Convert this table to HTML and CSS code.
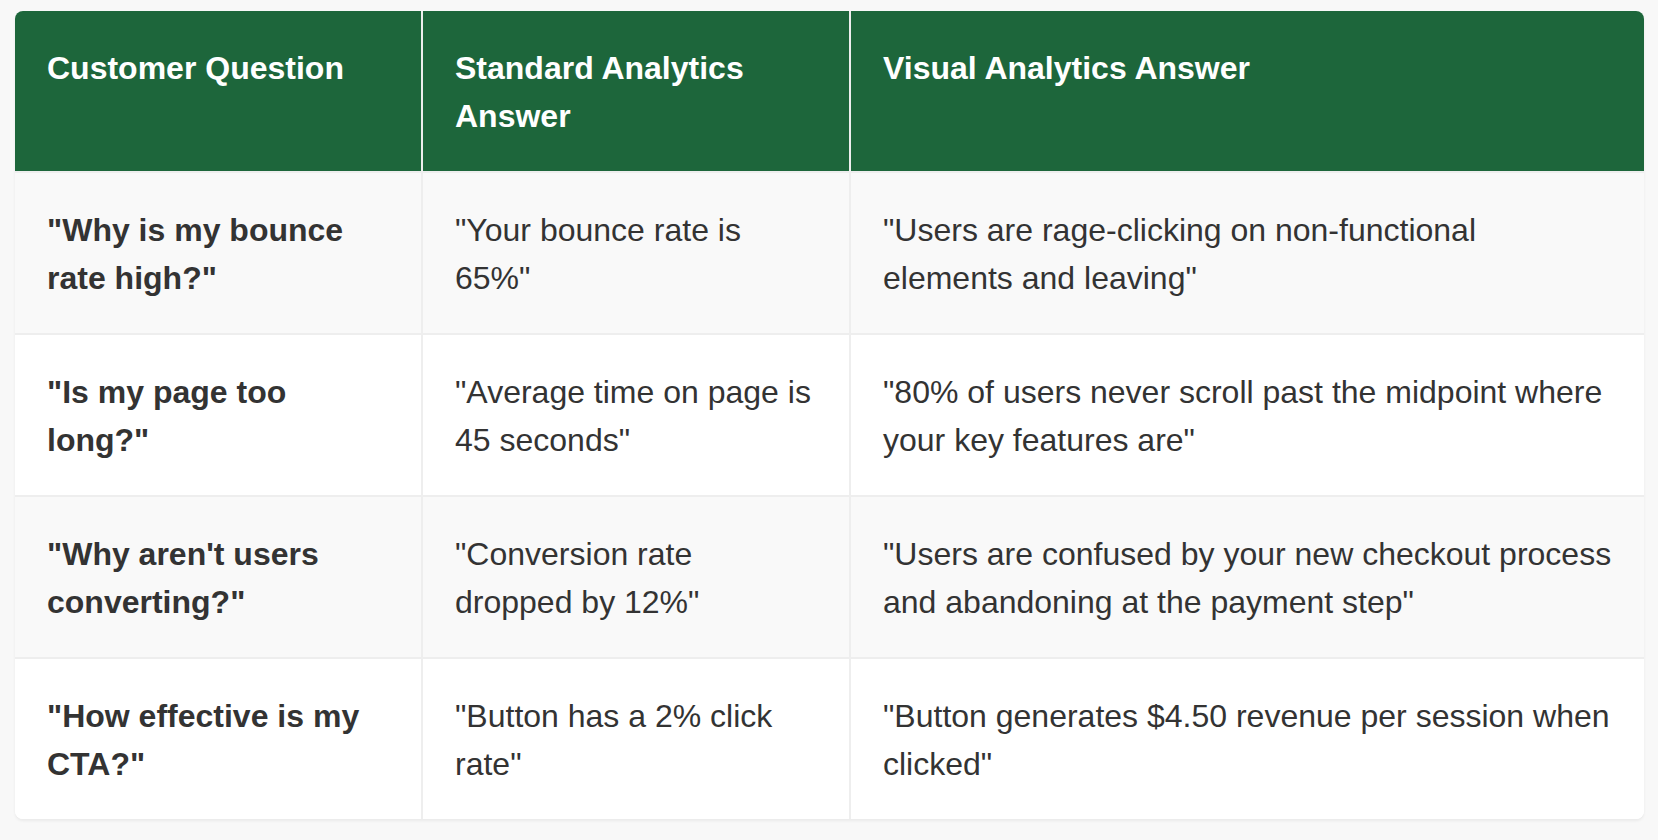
FILE: index.html
```html
<!DOCTYPE html>
<html lang="en">
<head>
<meta charset="utf-8">
<title>Analytics comparison</title>
<link rel="stylesheet" href="styles.css">
</head>
<body>
<div class="wrap">
<table class="cmp">
  <colgroup>
    <col class="c1"><col class="c2"><col class="c3">
  </colgroup>
  <thead>
    <tr>
      <th>Customer Question</th>
      <th>Standard Analytics Answer</th>
      <th>Visual Analytics Answer</th>
    </tr>
  </thead>
  <tbody>
    <tr>
      <td class="q">"Why is my bounce rate high?"</td>
      <td>"Your bounce rate is 65%"</td>
      <td>"Users are rage-clicking on non-functional elements and leaving"</td>
    </tr>
    <tr>
      <td class="q">"Is my page too long?"</td>
      <td>"Average time on page is 45 seconds"</td>
      <td>"80% of users never scroll past the midpoint where your key features are"</td>
    </tr>
    <tr>
      <td class="q">"Why aren't users converting?"</td>
      <td>"Conversion rate dropped by 12%"</td>
      <td>"Users are confused by your new checkout process and abandoning at the payment step"</td>
    </tr>
    <tr>
      <td class="q">"How effective is my CTA?"</td>
      <td>"Button has a 2% click rate"</td>
      <td>"Button generates $4.50 revenue per session when clicked"</td>
    </tr>
  </tbody>
</table>
</div>
</body>
</html>
```

FILE: styles.css
```css
html, body {
  margin: 0;
  padding: 0;
  background: #f8f8f8;
}
body {
  font-family: "Liberation Sans", Arial, Helvetica, sans-serif;
  color: #333333;
}
.wrap {
  padding: 11px 14px 20px 15px;
}
.cmp {
  width: 1629px;
  table-layout: fixed;
  border-collapse: separate;
  border-spacing: 0;
  border-radius: 8px;
  overflow: hidden;
  background: #ffffff;
  box-shadow: 0 2px 3px rgba(0, 0, 0, 0.06);
  font-size: 32px;
  line-height: 48px;
}
.c1 { width: 408px; }
.c2 { width: 428px; }
.c3 { width: 793px; }
.cmp th,
.cmp td {
  padding: 33px 32px 31px;
  text-align: left;
  vertical-align: top;
  border-right: 2px solid #eeeeee;
  border-bottom: 2px solid #eeeeee;
}
.cmp th:last-child,
.cmp td:last-child {
  border-right: none;
}
.cmp tbody tr:last-child td {
  border-bottom: none;
}
.cmp th {
  background: #1d663b;
  color: #ffffff;
  font-weight: bold;
}
.cmp tbody tr:nth-child(odd) td {
  background: #f9f9f9;
}
.cmp tbody tr:nth-child(even) td {
  background: #ffffff;
}
.cmp td.q {
  font-weight: bold;
}
```
